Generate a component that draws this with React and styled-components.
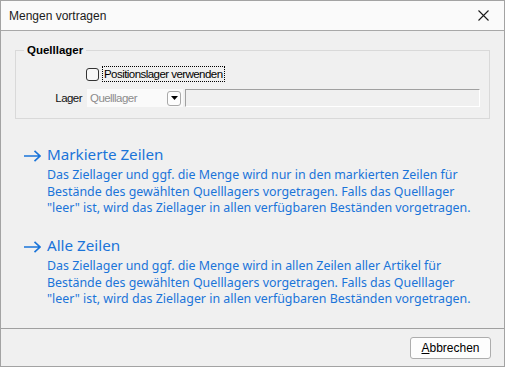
import React from "react";
import styled, { createGlobalStyle } from "styled-components";

const Global = createGlobalStyle`
  html, body {
    margin: 0;
    padding: 0;
    background: #f0f0f0;
  }
  * {
    box-sizing: border-box;
  }
`;

const Window = styled.div`
  width: 505px;
  height: 367px;
  display: flex;
  flex-direction: column;
  border: 1px solid #a3a3a3;
  background: #f0f0f0;
  font-family: "Liberation Sans", Arial, sans-serif;
  color: #000;
`;

const TitleBar = styled.div`
  height: 30px;
  flex: none;
  display: flex;
  align-items: center;
  justify-content: space-between;
  padding: 0 15px 0 8px;
  background: #fafafa;
  border-bottom: 1px solid #a8a8a8;
`;

const Title = styled.div`
  font-size: 12px;
  color: #1b1b1b;
`;

const Body = styled.div`
  flex: 1;
  display: flex;
  flex-direction: column;
  padding: 12px 14px 0 14px;
`;

const Group = styled.fieldset`
  margin: 0;
  padding: 8px 9px 11px 0;
  border: 1px solid #d9d9d9;
  display: flex;
  flex-direction: column;
  gap: 7px;
`;

const Legend = styled.legend`
  margin-left: 8px;
  padding: 0 3px;
  font-size: 11.5px;
  font-weight: bold;
  line-height: 15px;
`;

const FormRow = styled.div`
  display: grid;
  grid-template-columns: 66px 1fr;
  column-gap: 5px;
  align-items: center;
`;

const NarrowText = styled.span`
  font-family: "Liberation Sans", Arial, sans-serif;
  font-size: 11.5px;
  letter-spacing: -0.55px;
`;

const FieldLabel = styled(NarrowText)`
  text-align: right;
  color: #111;
`;

const CheckWrap = styled.label`
  grid-column: 2;
  display: flex;
  align-items: center;
  gap: 3px;
  margin-left: -1px;
`;

const CheckBox = styled.span`
  width: 13px;
  height: 13px;
  border: 1px solid #333;
  border-radius: 3px;
  background: #f7f7f7;
`;

const FocusLabel = styled(NarrowText)`
  border: 1px dotted #000;
  padding: 0 1px;
  line-height: 14px;
`;

const Fields = styled.div`
  display: flex;
  gap: 2px;
  height: 18px;
`;

const Combo = styled.div`
  width: 96px;
  display: flex;
  align-items: center;
  justify-content: space-between;
  padding: 0 2px 0 3px;
  background: #fafafa;
`;

const ComboText = styled(NarrowText)`
  color: #8c8c8c;
`;

const DropButton = styled.div`
  width: 14px;
  height: 15px;
  border: 1px solid #a9a9a9;
  border-radius: 3px;
  background: #fdfdfd;
  display: flex;
  align-items: center;
  justify-content: center;
`;

const TextField = styled.div`
  flex: 1;
  border-top: 1px solid #a0a0a0;
  border-left: 1px solid #a0a0a0;
  border-right: 1px solid #ffffff;
  border-bottom: 1px solid #ffffff;
  background: #f0f0f0;
`;

const Section = styled.div`
  display: grid;
  grid-template-columns: 24px 1fr;
  align-items: start;
  padding-left: 8px;
  color: #1a74d9;
  font-family: "Noto Sans", "Liberation Sans", sans-serif;
  margin-top: ${(p) => p.$top}px;
`;

const Arrow = styled.div`
  display: flex;
  padding-top: 6px;
  svg {
    display: block;
  }
`;

const SectionTitle = styled.div`
  font-size: 15.2px;
  line-height: 20px;
`;

const SectionText = styled.div`
  grid-column: 2;
  font-size: 12.4px;
  line-height: 16.5px;
  margin-top: 3px;
`;

const Footer = styled.div`
  flex: none;
  height: 38px;
  border-top: 1px solid #a0a0a0;
  display: flex;
  justify-content: flex-end;
  align-items: flex-start;
  padding: 8px 13px 0 0;
`;

const Button = styled.button`
  width: 81px;
  height: 22px;
  border: 1px solid #adadad;
  border-radius: 3px;
  background: #fdfdfd;
  font-family: "Liberation Sans", Arial, sans-serif;
  font-size: 12px;
  color: #000;
  padding: 0;
  u {
    text-decoration: underline;
  }
`;

const ArrowIcon = () => (
  <svg width="18" height="12" viewBox="0 0 18 12">
    <path d="M1 6H17M11.5 0.8L17 6L11.5 11.2" fill="none" stroke="#1a74d9" strokeWidth="1.6" />
  </svg>
);

const CloseIcon = () => (
  <svg width="11" height="11" viewBox="0 0 11 11">
    <path d="M0.5 0.5L10.5 10.5M10.5 0.5L0.5 10.5" stroke="#1a1a1a" strokeWidth="1.1" />
  </svg>
);

const Caret = () => (
  <svg width="7" height="4" viewBox="0 0 7 4">
    <path d="M0 0H7L3.5 4Z" fill="#000" />
  </svg>
);

const sections = [
  {
    title: "Markierte Zeilen",
    top: 25,
    lines: [
      "Das Ziellager und ggf. die Menge wird nur in den markierten Zeilen für",
      "Bestände des gewählten Quelllagers vorgetragen. Falls das Quelllager",
      "\"leer\" ist, wird das Ziellager in allen verfügbaren Beständen vorgetragen.",
    ],
  },
  {
    title: "Alle Zeilen",
    top: 18.5,
    lines: [
      "Das Ziellager und ggf. die Menge wird in allen Zeilen aller Artikel für",
      "Bestände des gewählten Quelllagers vorgetragen. Falls das Quelllager",
      "\"leer\" ist, wird das Ziellager in allen verfügbaren Beständen vorgetragen.",
    ],
  },
];

export default function App() {
  return (
    <>
      <Global />
      <Window>
        <TitleBar>
          <Title>Mengen vortragen</Title>
          <CloseIcon />
        </TitleBar>
        <Body>
          <Group>
            <Legend>Quelllager</Legend>
            <FormRow>
              <CheckWrap>
                <CheckBox />
                <FocusLabel>Positionslager verwenden</FocusLabel>
              </CheckWrap>
            </FormRow>
            <FormRow>
              <FieldLabel>Lager</FieldLabel>
              <Fields>
                <Combo>
                  <ComboText>Quelllager</ComboText>
                  <DropButton>
                    <Caret />
                  </DropButton>
                </Combo>
                <TextField />
              </Fields>
            </FormRow>
          </Group>
          {sections.map((s) => (
            <Section key={s.title} $top={s.top}>
              <Arrow>
                <ArrowIcon />
              </Arrow>
              <SectionTitle>{s.title}</SectionTitle>
              <SectionText>
                {s.lines.map((l, i) => (
                  <div key={i}>{l}</div>
                ))}
              </SectionText>
            </Section>
          ))}
        </Body>
        <Footer>
          <Button>
            <u>A</u>bbrechen
          </Button>
        </Footer>
      </Window>
    </>
  );
}
